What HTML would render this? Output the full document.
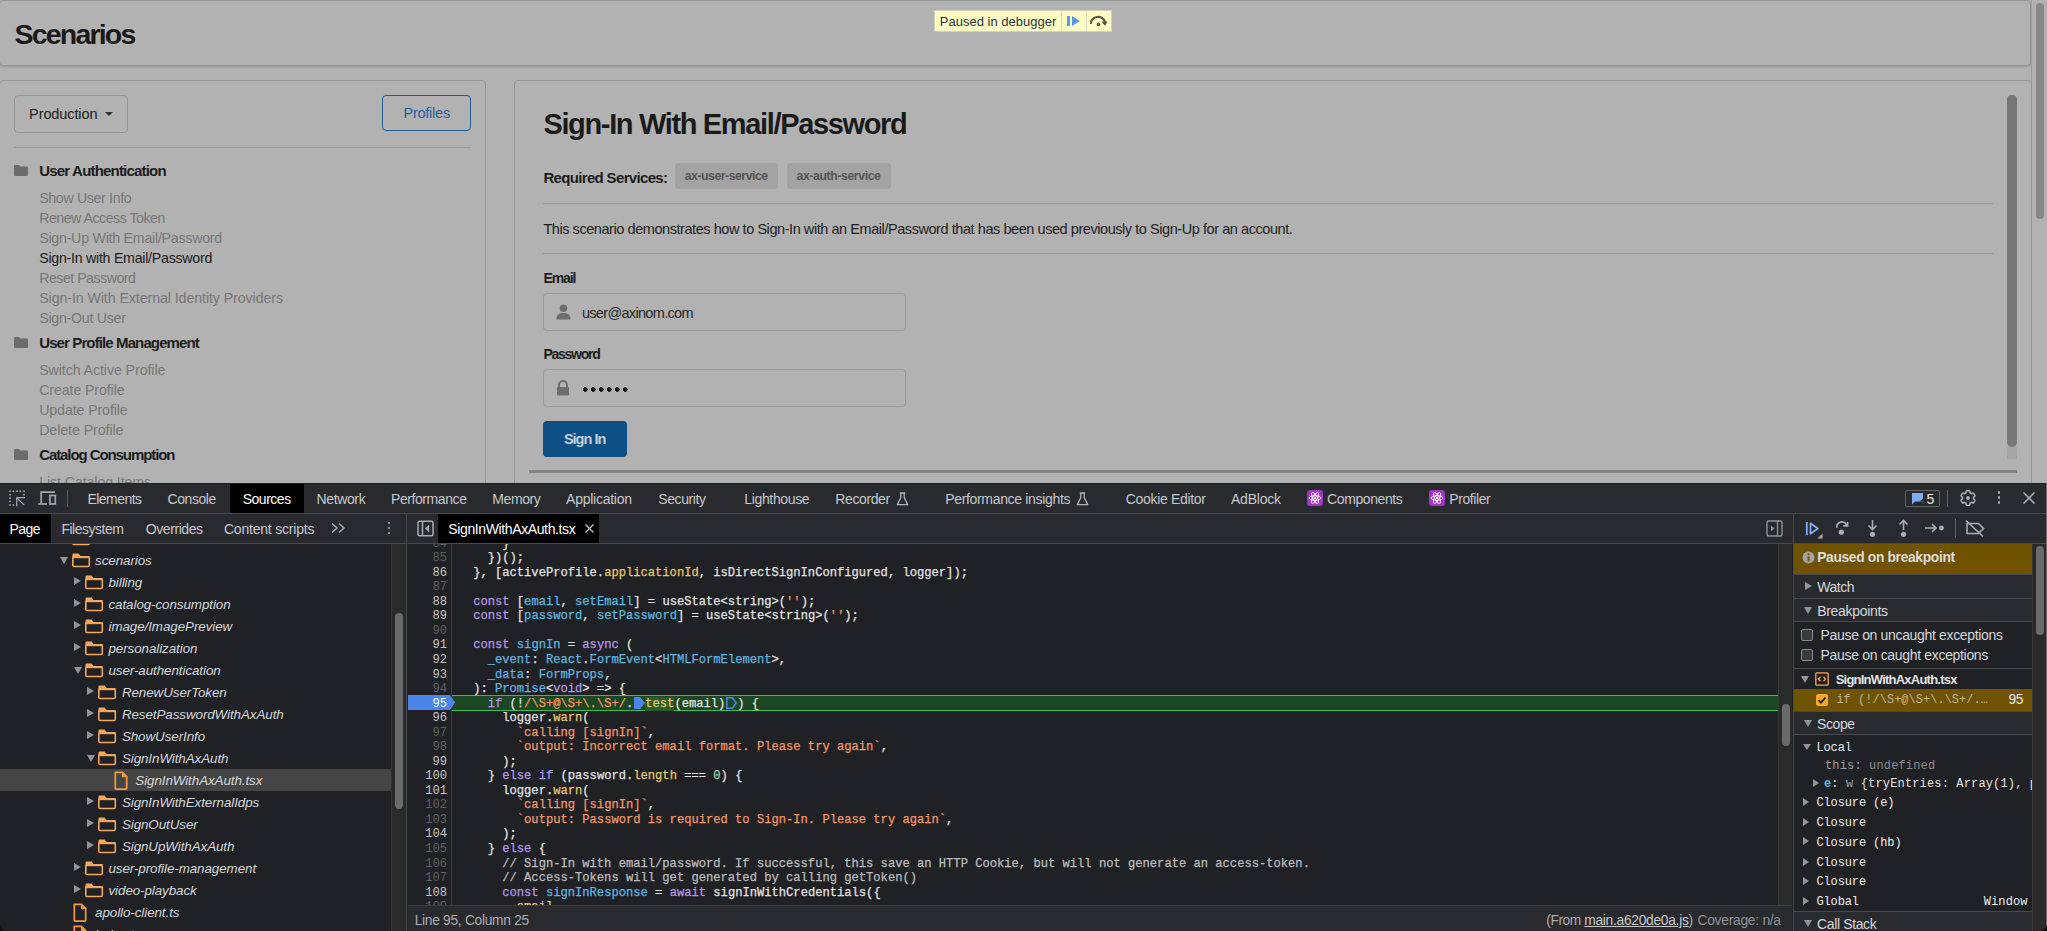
<!DOCTYPE html>
<html><head><meta charset="utf-8">
<style>
*{margin:0;padding:0;box-sizing:border-box}
html,body{width:2047px;height:931px;overflow:hidden;background:#b2b2b2;font-family:"Liberation Sans",sans-serif}
.a{position:absolute;white-space:nowrap}
#page{position:absolute;left:0;top:0;width:2047px;height:483px;background:#b2b2b2;overflow:hidden}
.card{position:absolute;border:1px solid #969696;border-radius:4px;background:#b2b2b2}
.nav{color:#767676;font-size:14px;letter-spacing:-0.35px}
.grp{color:#1c1c1c;font-size:14.6px;font-weight:bold;letter-spacing:-0.45px}
.fold{position:absolute;width:14px;height:11px;background:#6c6c6c;border-radius:1px}
.fold:before{content:"";position:absolute;left:0;top:-2px;width:6px;height:3px;background:#6c6c6c;border-radius:1px 1px 0 0}
#dt{position:absolute;left:0;top:483px;width:2047px;height:448px;background:#202124;overflow:hidden;color:#e3e3e3}
.tb{font-size:13.2px;color:#c3c3c3}
.mono{font-family:"Liberation Mono",monospace}
</style></head><body>
<div id="page">
<div class="card" style="left:-1px;top:0;width:2032px;height:66px;box-shadow:0 1px 2px rgba(0,0,0,.15)"></div>
<div class="a" style="left:14.5px;top:17.71px;font:normal bold 28.5px/normal 'Liberation Sans',sans-serif;color:#1a1a1a;letter-spacing:-1.805px;">Scenarios</div>
<div class="a" style="left:2031px;top:0px;width:1px;height:483px;background:#9d9d9d;"></div>
<div class="a" style="left:2036px;top:3px;width:8px;height:216px;background:#878787;border-radius:4px"></div>
<div class="card" style="left:-1px;top:80px;width:487px;height:420px"></div>
<div class="a" style="left:14px;top:95px;width:114px;height:38px;border:1px solid #969696;border-radius:4px"></div>
<div class="a" style="left:29.1px;top:105.88px;font:normal normal 14.5px/normal 'Liberation Sans',sans-serif;color:#1e1e1e;letter-spacing:-0.102px;">Production</div>
<div class="a" style="left:105.3px;top:112.3px;width:0;height:0;border-left:4px solid transparent;border-right:4px solid transparent;border-top:4px solid #2e2e2e"></div>
<div class="a" style="left:382px;top:95px;width:89px;height:36px;border:1px solid #1f5c93;border-radius:4px"></div>
<div class="a" style="left:403.5px;top:105.08px;font:normal normal 14.5px/normal 'Liberation Sans',sans-serif;color:#1f5f9c;letter-spacing:-0.244px;">Profiles</div>
<div class="a" style="left:14px;top:147px;width:457px;height:1px;background:#989898;"></div>
<svg class="a" style="left:14px;top:165px" width="14" height="11" viewBox="0 0 14 11"><path d="M0 1.1A1.1 1.1 0 0 1 1.1 0H5l1.5 1.5h6.4A1.1 1.1 0 0 1 14 2.6V9.9A1.1 1.1 0 0 1 12.9 11H1.1A1.1 1.1 0 0 1 0 9.9z" fill="#6c6c6c"/></svg>
<div class="a" style="left:39.2px;top:162.33px;font:normal bold 15px/normal 'Liberation Sans',sans-serif;color:#1c1c1c;letter-spacing:-0.809px;">User Authentication</div>
<div class="a" style="left:39.2px;top:190.15px;font:normal normal 14.2px/normal 'Liberation Sans',sans-serif;color:#777777;letter-spacing:-0.341px;">Show User Info</div>
<div class="a" style="left:39.2px;top:210.15px;font:normal normal 14.2px/normal 'Liberation Sans',sans-serif;color:#777777;letter-spacing:-0.495px;">Renew Access Token</div>
<div class="a" style="left:39.2px;top:230.15px;font:normal normal 14.2px/normal 'Liberation Sans',sans-serif;color:#777777;letter-spacing:-0.237px;">Sign-Up With Email/Password</div>
<div class="a" style="left:39.2px;top:250.15px;font:normal normal 14.2px/normal 'Liberation Sans',sans-serif;color:#1c1c1c;letter-spacing:-0.257px;">Sign-In with Email/Password</div>
<div class="a" style="left:39.2px;top:270.15px;font:normal normal 14.2px/normal 'Liberation Sans',sans-serif;color:#777777;letter-spacing:-0.506px;">Reset Password</div>
<div class="a" style="left:39.2px;top:290.15px;font:normal normal 14.2px/normal 'Liberation Sans',sans-serif;color:#777777;letter-spacing:-0.076px;">Sign-In With External Identity Providers</div>
<div class="a" style="left:39.2px;top:310.15px;font:normal normal 14.2px/normal 'Liberation Sans',sans-serif;color:#777777;letter-spacing:-0.259px;">Sign-Out User</div>
<svg class="a" style="left:14px;top:337px" width="14" height="11" viewBox="0 0 14 11"><path d="M0 1.1A1.1 1.1 0 0 1 1.1 0H5l1.5 1.5h6.4A1.1 1.1 0 0 1 14 2.6V9.9A1.1 1.1 0 0 1 12.9 11H1.1A1.1 1.1 0 0 1 0 9.9z" fill="#6c6c6c"/></svg>
<div class="a" style="left:39.2px;top:333.93px;font:normal bold 15px/normal 'Liberation Sans',sans-serif;color:#1c1c1c;letter-spacing:-0.885px;">User Profile Management</div>
<div class="a" style="left:39.2px;top:362.35px;font:normal normal 14.2px/normal 'Liberation Sans',sans-serif;color:#777777;letter-spacing:-0.079px;">Switch Active Profile</div>
<div class="a" style="left:39.2px;top:382.38px;font:normal normal 14.2px/normal 'Liberation Sans',sans-serif;color:#777777;letter-spacing:-0.101px;">Create Profile</div>
<div class="a" style="left:39.2px;top:402.41px;font:normal normal 14.2px/normal 'Liberation Sans',sans-serif;color:#777777;letter-spacing:-0.106px;">Update Profile</div>
<div class="a" style="left:39.2px;top:422.44px;font:normal normal 14.2px/normal 'Liberation Sans',sans-serif;color:#777777;letter-spacing:-0.067px;">Delete Profile</div>
<svg class="a" style="left:14px;top:449px" width="14" height="11" viewBox="0 0 14 11"><path d="M0 1.1A1.1 1.1 0 0 1 1.1 0H5l1.5 1.5h6.4A1.1 1.1 0 0 1 14 2.6V9.9A1.1 1.1 0 0 1 12.9 11H1.1A1.1 1.1 0 0 1 0 9.9z" fill="#6c6c6c"/></svg>
<div class="a" style="left:39.2px;top:445.73px;font:normal bold 15px/normal 'Liberation Sans',sans-serif;color:#1c1c1c;letter-spacing:-1.086px;">Catalog Consumption</div>
<div class="a" style="left:39.2px;top:474.45px;font:normal normal 14.2px/normal 'Liberation Sans',sans-serif;color:#777777;letter-spacing:-0.092px;">List Catalog Items</div>
<div class="card" style="left:514px;top:80px;width:1518px;height:420px"></div>
<div class="a" style="left:543.4px;top:107.95px;font:normal bold 29px/normal 'Liberation Sans',sans-serif;color:#1a1a1a;letter-spacing:-1.346px;">Sign-In With Email/Password</div>
<div class="a" style="left:543.4px;top:168.73px;font:normal bold 15px/normal 'Liberation Sans',sans-serif;color:#1c1c1c;letter-spacing:-0.661px;">Required Services:</div>
<div class="a" style="left:675px;top:163px;width:103px;height:26px;background:#a3a3a3;border-radius:4px"></div>
<div class="a" style="left:684.7px;top:169.07px;font:normal bold 12.3px/normal 'Liberation Sans',sans-serif;color:#555555;letter-spacing:-0.484px;">ax-user-service</div>
<div class="a" style="left:787px;top:163px;width:104px;height:26px;background:#a3a3a3;border-radius:4px"></div>
<div class="a" style="left:796.5px;top:169.07px;font:normal bold 12.3px/normal 'Liberation Sans',sans-serif;color:#555555;letter-spacing:-0.416px;">ax-auth-service</div>
<div class="a" style="left:543px;top:203px;width:1450px;height:1px;background:#999999;"></div>
<div class="a" style="left:543.4px;top:221.18px;font:normal normal 14.5px/normal 'Liberation Sans',sans-serif;color:#1e1e1e;letter-spacing:-0.438px;">This scenario demonstrates how to Sign-In with an Email/Password that has been used previously to Sign-Up for an account.</div>
<div class="a" style="left:543px;top:253px;width:1450px;height:1px;background:#999999;"></div>
<div class="a" style="left:543.5px;top:270.33px;font:normal bold 14px/normal 'Liberation Sans',sans-serif;color:#1c1c1c;letter-spacing:-1.130px;">Email</div>
<div class="a" style="left:543px;top:293px;width:363px;height:38px;border:1px solid #9a9a9a;border-radius:4px"></div>
<svg class="a" style="left:556px;top:304px" width="15" height="16" viewBox="0 0 15 16"><circle cx="7.5" cy="4.2" r="3.8" fill="#6e6e6e"/><path d="M0.5 15.5 C0.5 10.5 3 9 7.5 9 C12 9 14.5 10.5 14.5 15.5 Z" fill="#6e6e6e"/></svg>
<div class="a" style="left:581.9px;top:305.28px;font:normal normal 14.5px/normal 'Liberation Sans',sans-serif;color:#262626;letter-spacing:-0.673px;">user@axinom.com</div>
<div class="a" style="left:543.5px;top:346.33px;font:normal bold 14px/normal 'Liberation Sans',sans-serif;color:#1c1c1c;letter-spacing:-1.280px;">Password</div>
<div class="a" style="left:543px;top:369px;width:363px;height:38px;border:1px solid #9a9a9a;border-radius:4px"></div>
<svg class="a" style="left:556px;top:380px" width="14" height="16" viewBox="0 0 14 16"><path d="M3 7 V5 A4 4 0 0 1 11 5 V7" stroke="#6e6e6e" stroke-width="2" fill="none"/><rect x="1" y="7" width="12" height="8.5" rx="1" fill="#6e6e6e"/></svg>
<div class="a" style="left:583px;top:387px;width:46px;height:5px;background:radial-gradient(circle at 2.3px 2.5px,#1a1a1a 2.1px,transparent 2.5px) 0 0/8px 5px repeat-x"></div>
<div class="a" style="left:543px;top:421px;width:84px;height:36px;background:#0e4f85;border-radius:4px"></div>
<div class="a" style="left:563.9px;top:431.48px;font:normal bold 14.5px/normal 'Liberation Sans',sans-serif;color:#c5cfd8;letter-spacing:-0.990px;">Sign In</div>
<div class="a" style="left:2007px;top:95px;width:10px;height:352px;background:#777;border-radius:5px"></div>
<div class="a" style="left:2007px;top:440px;width:10px;height:19px;background:#a6a6a6;"></div>
<div class="a" style="left:2007px;top:95px;width:10px;height:352px;background:#777;border-radius:5px"></div>
<div class="a" style="left:529px;top:470px;width:1488px;height:3px;background:#858585;"></div>
<div class="a" style="left:934px;top:10px;width:178px;height:22px;background:#ffffc5;border:1px solid #d2d2ba"></div>
<div class="a" style="left:1061px;top:11px;width:1px;height:20px;background:#d8d8c0;"></div>
<div class="a" style="left:1086px;top:11px;width:1px;height:20px;background:#d8d8c0;"></div>
<div class="a" style="left:939.8px;top:14.04px;font:normal normal 13px/normal 'Liberation Sans',sans-serif;color:#2a3340;letter-spacing:0.007px;">Paused in debugger</div>
<svg class="a" style="left:1066px;top:15px" width="16" height="12" viewBox="0 0 16 12"><rect x="1" y="1" width="3" height="10" fill="#5d95e9"/><path d="M6 1 L14 6 L6 11 Z" fill="#5d95e9"/></svg>
<svg class="a" style="left:1089px;top:15px" width="20" height="13" viewBox="0 0 20 13"><path d="M2 9 A7 6 0 0 1 16 7" stroke="#5a5a48" stroke-width="2.2" fill="none"/><path d="M12.5 6.5 L18.5 6.5 L16 11 Z" fill="#5a5a48"/><circle cx="9.5" cy="9.5" r="1.8" fill="#5a5a48"/></svg>
</div>
<div class="a" style="left:0px;top:483px;width:2047px;height:448px;background:#202124;"></div>
<div class="a" style="left:0px;top:483px;width:2047px;height:30px;background:#292a2d;"></div>
<div class="a" style="left:0px;top:483px;width:2047px;height:1px;background:#1e1f22;"></div>
<div class="a" style="left:0px;top:513px;width:2047px;height:1px;background:#46494d;"></div>
<div class="a" style="left:0px;top:514px;width:2047px;height:29px;background:#292a2d;"></div>
<div class="a" style="left:0px;top:543px;width:2047px;height:1px;background:#46494d;"></div>
<div class="a" style="left:230px;top:484px;width:74px;height:29px;background:#000;"></div>
<svg class="a" style="left:0;top:485px" width="75" height="27" viewBox="0 485 75 27"><g fill="#a3a5a8"><rect x="9.2" y="490.4" width="1.6" height="1.6"/><rect x="12.7" y="490.4" width="1.6" height="1.6"/><rect x="16.2" y="490.4" width="1.6" height="1.6"/><rect x="19.5" y="490.4" width="1.6" height="1.6"/><rect x="23.2" y="490.4" width="1.6" height="1.6"/><rect x="9.2" y="494.0" width="1.6" height="1.6"/><rect x="9.2" y="497.4" width="1.6" height="1.6"/><rect x="9.2" y="500.7" width="1.6" height="1.6"/><rect x="9.2" y="504.2" width="1.6" height="1.6"/><rect x="23.2" y="493.9" width="1.6" height="1.6"/><rect x="12.7" y="504.2" width="1.6" height="1.6"/></g><g fill="none" stroke="#a3a5a8" stroke-width="1.3"><path d="M16.7 506.2V497.6H25"/><path d="M17.3 498.2L24.2 505.1"/></g><g fill="none" stroke="#a3a5a8" stroke-width="1.7"><path d="M41.2 504V492.2H55"/><path d="M38.1 504h8.8"/><rect x="49.9" y="495.5" width="5.4" height="8.5"/></g></svg>
<div class="a" style="left:67px;top:490px;width:1px;height:17px;background:#5a5d61;"></div>
<div class="a" style="left:87.5px;top:491.43px;font:normal normal 14.0px/normal 'Liberation Sans',sans-serif;color:#c5c8cc;letter-spacing:-0.545px;">Elements</div>
<div class="a" style="left:167.6px;top:491.43px;font:normal normal 14.0px/normal 'Liberation Sans',sans-serif;color:#c5c8cc;letter-spacing:-0.438px;">Console</div>
<div class="a" style="left:242.7px;top:491.43px;font:normal normal 14.0px/normal 'Liberation Sans',sans-serif;color:#ffffff;letter-spacing:-0.480px;">Sources</div>
<div class="a" style="left:316.5px;top:491.43px;font:normal normal 14.0px/normal 'Liberation Sans',sans-serif;color:#c5c8cc;letter-spacing:-0.364px;">Network</div>
<div class="a" style="left:391.0px;top:491.43px;font:normal normal 14.0px/normal 'Liberation Sans',sans-serif;color:#c5c8cc;letter-spacing:-0.423px;">Performance</div>
<div class="a" style="left:492.3px;top:491.43px;font:normal normal 14.0px/normal 'Liberation Sans',sans-serif;color:#c5c8cc;letter-spacing:-0.427px;">Memory</div>
<div class="a" style="left:566.1px;top:491.43px;font:normal normal 14.0px/normal 'Liberation Sans',sans-serif;color:#c5c8cc;letter-spacing:-0.254px;">Application</div>
<div class="a" style="left:658.3px;top:491.43px;font:normal normal 14.0px/normal 'Liberation Sans',sans-serif;color:#c5c8cc;letter-spacing:-0.409px;">Security</div>
<div class="a" style="left:744.3px;top:491.43px;font:normal normal 14.0px/normal 'Liberation Sans',sans-serif;color:#c5c8cc;letter-spacing:-0.350px;">Lighthouse</div>
<div class="a" style="left:835.3px;top:491.43px;font:normal normal 14.0px/normal 'Liberation Sans',sans-serif;color:#c5c8cc;letter-spacing:-0.398px;">Recorder</div>
<div class="a" style="left:945.2px;top:491.43px;font:normal normal 14.0px/normal 'Liberation Sans',sans-serif;color:#c5c8cc;letter-spacing:-0.325px;">Performance insights</div>
<div class="a" style="left:1125.8px;top:491.43px;font:normal normal 14.0px/normal 'Liberation Sans',sans-serif;color:#c5c8cc;letter-spacing:-0.334px;">Cookie Editor</div>
<div class="a" style="left:1231.0px;top:491.43px;font:normal normal 14.0px/normal 'Liberation Sans',sans-serif;color:#c5c8cc;letter-spacing:-0.223px;">AdBlock</div>
<div class="a" style="left:1327.1px;top:491.43px;font:normal normal 14.0px/normal 'Liberation Sans',sans-serif;color:#c5c8cc;letter-spacing:-0.408px;">Components</div>
<div class="a" style="left:1449.3px;top:491.43px;font:normal normal 14.0px/normal 'Liberation Sans',sans-serif;color:#c5c8cc;letter-spacing:-0.418px;">Profiler</div>
<svg class="a" style="left:895.5px;top:492px" width="13" height="14" viewBox="0 0 13 14" fill="none" stroke="#b0b3b8" stroke-width="1.3" stroke-linejoin="round"><path d="M3.8 1h5.4M4.8 1v4.5L1.3 12.6h10.4L8.2 5.5V1"/></svg>
<svg class="a" style="left:1076px;top:492px" width="13" height="14" viewBox="0 0 13 14" fill="none" stroke="#b0b3b8" stroke-width="1.3" stroke-linejoin="round"><path d="M3.8 1h5.4M4.8 1v4.5L1.3 12.6h10.4L8.2 5.5V1"/></svg>
<svg class="a" style="left:1307px;top:490px" width="16" height="16" viewBox="0 0 16 16"><rect width="16" height="16" rx="3" fill="#a233c6"/><g fill="none" stroke="#fff" stroke-width="0.9"><ellipse cx="8" cy="8" rx="6" ry="2.3"/><ellipse cx="8" cy="8" rx="6" ry="2.3" transform="rotate(60 8 8)"/><ellipse cx="8" cy="8" rx="6" ry="2.3" transform="rotate(120 8 8)"/></g><circle cx="8" cy="8" r="1.2" fill="#fff"/></svg>
<svg class="a" style="left:1429px;top:490px" width="16" height="16" viewBox="0 0 16 16"><rect width="16" height="16" rx="3" fill="#a233c6"/><g fill="none" stroke="#fff" stroke-width="0.9"><ellipse cx="8" cy="8" rx="6" ry="2.3"/><ellipse cx="8" cy="8" rx="6" ry="2.3" transform="rotate(60 8 8)"/><ellipse cx="8" cy="8" rx="6" ry="2.3" transform="rotate(120 8 8)"/></g><circle cx="8" cy="8" r="1.2" fill="#fff"/></svg>
<div class="a" style="left:1905px;top:490px;width:35px;height:17px;border:1px solid #5f6368;border-radius:2px"></div>
<svg class="a" style="left:1911px;top:492px" width="13" height="13" viewBox="0 0 13 13"><path d="M1 1h11v8.5H4L1 12.5z" fill="#7cacf8"/><path d="M9 9.5L12 6.5V9.5z" fill="#292a2d"/></svg>
<div class="a" style="left:1926.4px;top:491.43px;font:normal normal 14.0px/normal 'Liberation Sans',sans-serif;color:#e8eaed;letter-spacing:0.000px;">5</div>
<div class="a" style="left:1947px;top:490px;width:1px;height:17px;background:#5f6368;"></div>
<svg class="a" style="left:1959px;top:489px" width="18" height="18" viewBox="0 0 24 24"><path fill="none" stroke="#a9acb0" stroke-width="2" stroke-linejoin="round" d="M19.14 12.94c.04-.3.06-.61.06-.94 0-.32-.02-.64-.07-.94l2.03-1.58a.49.49 0 0 0 .12-.61l-1.92-3.32a.488.488 0 0 0-.59-.22l-2.39.96c-.5-.38-1.030-.7-1.62-.94l-.36-2.54a.484.484 0 0 0-.48-.41h-3.84c-.24 0-.43.17-.47.41l-.36 2.54c-.59.24-1.13.57-1.62.94l-2.39-.96c-.22-.08-.47 0-.59.22L2.740 8.870c-.12.21-.08.47.12.61l2.030 1.58c-.05.3-.09.63-.09.94s.02.64.07.94l-2.03 1.58a.49.49 0 0 0-.12.61l1.920 3.32c.12.22.37.29.59.22l2.39-.96c.5.38 1.03.7 1.62.94l.36 2.54c.05.24.24.41.48.41h3.84c.24 0 .44-.17.47-.41l.36-2.54c.59-.24 1.13-.56 1.62-.94l2.39.96c.22.08.47 0 .59-.22l1.92-3.32c.12-.22.07-.47-.12-.61l-2.01-1.58z"/><circle cx="12" cy="12" r="2.6" fill="#a9acb0"/></svg>
<div class="a" style="left:1997.7px;top:491px;width:2.6px;height:2.6px;border-radius:50%;background:#a9acb0"></div>
<div class="a" style="left:1997.7px;top:496px;width:2.6px;height:2.6px;border-radius:50%;background:#a9acb0"></div>
<div class="a" style="left:1997.7px;top:501px;width:2.6px;height:2.6px;border-radius:50%;background:#a9acb0"></div>
<svg class="a" style="left:2022px;top:491px" width="14" height="14" viewBox="0 0 14 14"><path d="M1.5 1.5l11 11M12.5 1.5l-11 11" stroke="#a9acb0" stroke-width="1.6"/></svg>
<div class="a" style="left:0px;top:514px;width:51px;height:29px;background:#000;"></div>
<div class="a" style="left:9.4px;top:520.83px;font:normal normal 14.0px/normal 'Liberation Sans',sans-serif;color:#ffffff;letter-spacing:-0.549px;">Page</div>
<div class="a" style="left:61.4px;top:520.83px;font:normal normal 14.0px/normal 'Liberation Sans',sans-serif;color:#c5c8cc;letter-spacing:-0.490px;">Filesystem</div>
<div class="a" style="left:145.8px;top:520.83px;font:normal normal 14.0px/normal 'Liberation Sans',sans-serif;color:#c5c8cc;letter-spacing:-0.432px;">Overrides</div>
<div class="a" style="left:223.9px;top:520.83px;font:normal normal 14.0px/normal 'Liberation Sans',sans-serif;color:#c5c8cc;letter-spacing:-0.205px;">Content scripts</div>
<svg class="a" style="left:329.5px;top:521.8px" width="16" height="12" viewBox="0 0 16 12" fill="none" stroke="#a9acb0" stroke-width="1.5"><path d="M2 1.5l5 4.5-5 4.5M9 1.5l5 4.5-5 4.5"/></svg>
<div class="a" style="left:387.7px;top:521.5px;width:2.6px;height:2.6px;border-radius:50%;background:#a9acb0"></div>
<div class="a" style="left:387.7px;top:526.5px;width:2.6px;height:2.6px;border-radius:50%;background:#a9acb0"></div>
<div class="a" style="left:387.7px;top:531.5px;width:2.6px;height:2.6px;border-radius:50%;background:#a9acb0"></div>
<div class="a" style="left:406px;top:514px;width:1px;height:417px;background:#46494d;"></div>
<svg class="a" style="left:417px;top:519.5px" width="17" height="17" viewBox="0 0 17 17" fill="none" stroke="#a9acb0" stroke-width="1.5"><rect x="1" y="1.2" width="15" height="14.6" rx="1.5"/><path d="M5.5 1v15"/><path d="M12.2 4.5v8l-4.2-4z" fill="#a9acb0" stroke="none"/></svg>
<div class="a" style="left:438px;top:514px;width:161px;height:29px;background:#000;"></div>
<div class="a" style="left:448.3px;top:520.83px;font:normal normal 14.0px/normal 'Liberation Sans',sans-serif;color:#ffffff;letter-spacing:-0.381px;">SignInWithAxAuth.tsx</div>
<svg class="a" style="left:584px;top:523px" width="11" height="11" viewBox="0 0 11 11"><path d="M1.5 1.5l8 8M9.5 1.5l-8 8" stroke="#c0c3c7" stroke-width="1.3"/></svg>
<svg class="a" style="left:1766px;top:520px" width="17" height="17" viewBox="0 0 17 17" fill="none" stroke="#8f9297" stroke-width="1.4"><rect x="1" y="1" width="15" height="15" rx="1.5"/><path d="M11.5 1v15"/><path d="M5 5.5v6l3.5-3z" fill="#8f9297" stroke="none"/></svg>
<div class="a" style="left:1793px;top:514px;width:1px;height:417px;background:#46494d;"></div>
<svg class="a" style="left:1805px;top:520px" width="19" height="19" viewBox="0 0 19 19"><path d="M1.8 2v13" stroke="#7cacf8" stroke-width="1.8"/><path d="M5.5 3.3l7.3 5.2-7.3 5.2z" fill="none" stroke="#7cacf8" stroke-width="1.8" stroke-linejoin="round"/><path d="M17.5 13.5v5h-5z" fill="#a9acb0"/></svg>
<svg class="a" style="left:1834px;top:519px" width="17" height="18" viewBox="0 0 17 18" fill="none" stroke="#a9acb0" stroke-width="1.7"><path d="M3 8.8A5 4.5 0 0 1 12.8 6.2"/><path d="M9.3 6.8h4.3V3" /><circle cx="7.3" cy="13.2" r="2.6" fill="#a9acb0" stroke="none"/></svg>
<svg class="a" style="left:1866px;top:519px" width="13" height="19" viewBox="0 0 13 19" fill="none" stroke="#a9acb0" stroke-width="1.6"><path d="M6.5 1v9M2.5 6.5l4 4 4-4"/><circle cx="6.5" cy="15.3" r="2.6" fill="#a9acb0" stroke="none"/></svg>
<svg class="a" style="left:1897px;top:519px" width="13" height="19" viewBox="0 0 13 19" fill="none" stroke="#a9acb0" stroke-width="1.6"><path d="M6.5 11V2M2.5 5.5l4-4 4 4"/><circle cx="6.5" cy="15.3" r="2.6" fill="#a9acb0" stroke="none"/></svg>
<svg class="a" style="left:1924px;top:520px" width="22" height="16" viewBox="0 0 22 16" fill="none" stroke="#a9acb0" stroke-width="1.6"><path d="M1 8h11M8 4l4 4-4 4"/><circle cx="17.5" cy="8" r="2.4" fill="#a9acb0" stroke="none"/></svg>
<div class="a" style="left:1955px;top:519px;width:1px;height:19px;background:#5f6368;"></div>
<svg class="a" style="left:1964px;top:519px" width="22" height="19" viewBox="0 0 22 19" fill="none" stroke="#a9acb0" stroke-width="1.6"><path d="M3 4.5h11.5l5 5-5 5H3z"/><path d="M2 1.5l17 16"/></svg>
<div class="a" style="left:0;top:544px;width:406px;height:387px;overflow:hidden">
<div class="a" style="left:0px;top:225px;width:391px;height:22px;background:#454545;"></div>
<div class="a" style="left:60.4px;top:-10.6px;width:0;height:0;border-top:4.7px solid transparent;border-bottom:4.7px solid transparent;border-left:7.3px solid #909397"></div>
<svg class="a" style="left:71.5px;top:-13.1px" width="19" height="15" viewBox="0 0 19 15"><path d="M0.5 3.2V1.6A1.1 1.1 0 0 1 1.6 0.5H6.6L8.6 3.2z" fill="#f2a65e"/><rect x="0.8" y="3.9" width="16.5" height="9.6" rx="1.3" fill="none" stroke="#f2a65e" stroke-width="1.6"/><rect x="0.5" y="3" width="17" height="2.2" fill="#f2a65e"/></svg>
<div class="a" style="left:95.1px;top:-13.13px;font:italic normal 13.4px/normal 'Liberation Sans',sans-serif;color:#d5d8dc;letter-spacing:-0.080px;">routes</div>
<div class="a" style="left:60.1px;top:13.4px;width:0;height:0;border-left:4.5px solid transparent;border-right:4.5px solid transparent;border-top:7px solid #909397"></div>
<svg class="a" style="left:71.5px;top:8.9px" width="19" height="15" viewBox="0 0 19 15"><path d="M0.5 3.2V1.6A1.1 1.1 0 0 1 1.6 0.5H6.6L8.6 3.2z" fill="#f2a65e"/><rect x="0.8" y="3.9" width="16.5" height="9.6" rx="1.3" fill="none" stroke="#f2a65e" stroke-width="1.6"/><rect x="0.5" y="3" width="17" height="2.2" fill="#f2a65e"/></svg>
<div class="a" style="left:95.1px;top:8.87px;font:italic normal 13.4px/normal 'Liberation Sans',sans-serif;color:#d5d8dc;letter-spacing:-0.080px;">scenarios</div>
<div class="a" style="left:73.8px;top:33.4px;width:0;height:0;border-top:4.7px solid transparent;border-bottom:4.7px solid transparent;border-left:7.3px solid #909397"></div>
<svg class="a" style="left:84.9px;top:30.9px" width="19" height="15" viewBox="0 0 19 15"><path d="M0.5 3.2V1.6A1.1 1.1 0 0 1 1.6 0.5H6.6L8.6 3.2z" fill="#f2a65e"/><rect x="0.8" y="3.9" width="16.5" height="9.6" rx="1.3" fill="none" stroke="#f2a65e" stroke-width="1.6"/><rect x="0.5" y="3" width="17" height="2.2" fill="#f2a65e"/></svg>
<div class="a" style="left:108.5px;top:30.87px;font:italic normal 13.4px/normal 'Liberation Sans',sans-serif;color:#d5d8dc;letter-spacing:-0.080px;">billing</div>
<div class="a" style="left:73.8px;top:55.4px;width:0;height:0;border-top:4.7px solid transparent;border-bottom:4.7px solid transparent;border-left:7.3px solid #909397"></div>
<svg class="a" style="left:84.9px;top:52.9px" width="19" height="15" viewBox="0 0 19 15"><path d="M0.5 3.2V1.6A1.1 1.1 0 0 1 1.6 0.5H6.6L8.6 3.2z" fill="#f2a65e"/><rect x="0.8" y="3.9" width="16.5" height="9.6" rx="1.3" fill="none" stroke="#f2a65e" stroke-width="1.6"/><rect x="0.5" y="3" width="17" height="2.2" fill="#f2a65e"/></svg>
<div class="a" style="left:108.5px;top:52.87px;font:italic normal 13.4px/normal 'Liberation Sans',sans-serif;color:#d5d8dc;letter-spacing:-0.080px;">catalog-consumption</div>
<div class="a" style="left:73.8px;top:77.4px;width:0;height:0;border-top:4.7px solid transparent;border-bottom:4.7px solid transparent;border-left:7.3px solid #909397"></div>
<svg class="a" style="left:84.9px;top:74.9px" width="19" height="15" viewBox="0 0 19 15"><path d="M0.5 3.2V1.6A1.1 1.1 0 0 1 1.6 0.5H6.6L8.6 3.2z" fill="#f2a65e"/><rect x="0.8" y="3.9" width="16.5" height="9.6" rx="1.3" fill="none" stroke="#f2a65e" stroke-width="1.6"/><rect x="0.5" y="3" width="17" height="2.2" fill="#f2a65e"/></svg>
<div class="a" style="left:108.5px;top:74.87px;font:italic normal 13.4px/normal 'Liberation Sans',sans-serif;color:#d5d8dc;letter-spacing:-0.080px;">image/ImagePreview</div>
<div class="a" style="left:73.8px;top:99.4px;width:0;height:0;border-top:4.7px solid transparent;border-bottom:4.7px solid transparent;border-left:7.3px solid #909397"></div>
<svg class="a" style="left:84.9px;top:96.9px" width="19" height="15" viewBox="0 0 19 15"><path d="M0.5 3.2V1.6A1.1 1.1 0 0 1 1.6 0.5H6.6L8.6 3.2z" fill="#f2a65e"/><rect x="0.8" y="3.9" width="16.5" height="9.6" rx="1.3" fill="none" stroke="#f2a65e" stroke-width="1.6"/><rect x="0.5" y="3" width="17" height="2.2" fill="#f2a65e"/></svg>
<div class="a" style="left:108.5px;top:96.87px;font:italic normal 13.4px/normal 'Liberation Sans',sans-serif;color:#d5d8dc;letter-spacing:-0.080px;">personalization</div>
<div class="a" style="left:73.5px;top:123.4px;width:0;height:0;border-left:4.5px solid transparent;border-right:4.5px solid transparent;border-top:7px solid #909397"></div>
<svg class="a" style="left:84.9px;top:118.9px" width="19" height="15" viewBox="0 0 19 15"><path d="M0.5 3.2V1.6A1.1 1.1 0 0 1 1.6 0.5H6.6L8.6 3.2z" fill="#f2a65e"/><rect x="0.8" y="3.9" width="16.5" height="9.6" rx="1.3" fill="none" stroke="#f2a65e" stroke-width="1.6"/><rect x="0.5" y="3" width="17" height="2.2" fill="#f2a65e"/></svg>
<div class="a" style="left:108.5px;top:118.87px;font:italic normal 13.4px/normal 'Liberation Sans',sans-serif;color:#d5d8dc;letter-spacing:-0.080px;">user-authentication</div>
<div class="a" style="left:87.2px;top:143.4px;width:0;height:0;border-top:4.7px solid transparent;border-bottom:4.7px solid transparent;border-left:7.3px solid #909397"></div>
<svg class="a" style="left:98.3px;top:140.9px" width="19" height="15" viewBox="0 0 19 15"><path d="M0.5 3.2V1.6A1.1 1.1 0 0 1 1.6 0.5H6.6L8.6 3.2z" fill="#f2a65e"/><rect x="0.8" y="3.9" width="16.5" height="9.6" rx="1.3" fill="none" stroke="#f2a65e" stroke-width="1.6"/><rect x="0.5" y="3" width="17" height="2.2" fill="#f2a65e"/></svg>
<div class="a" style="left:121.9px;top:140.87px;font:italic normal 13.4px/normal 'Liberation Sans',sans-serif;color:#d5d8dc;letter-spacing:-0.080px;">RenewUserToken</div>
<div class="a" style="left:87.2px;top:165.4px;width:0;height:0;border-top:4.7px solid transparent;border-bottom:4.7px solid transparent;border-left:7.3px solid #909397"></div>
<svg class="a" style="left:98.3px;top:162.9px" width="19" height="15" viewBox="0 0 19 15"><path d="M0.5 3.2V1.6A1.1 1.1 0 0 1 1.6 0.5H6.6L8.6 3.2z" fill="#f2a65e"/><rect x="0.8" y="3.9" width="16.5" height="9.6" rx="1.3" fill="none" stroke="#f2a65e" stroke-width="1.6"/><rect x="0.5" y="3" width="17" height="2.2" fill="#f2a65e"/></svg>
<div class="a" style="left:121.9px;top:162.87px;font:italic normal 13.4px/normal 'Liberation Sans',sans-serif;color:#d5d8dc;letter-spacing:-0.080px;">ResetPasswordWithAxAuth</div>
<div class="a" style="left:87.2px;top:187.4px;width:0;height:0;border-top:4.7px solid transparent;border-bottom:4.7px solid transparent;border-left:7.3px solid #909397"></div>
<svg class="a" style="left:98.3px;top:184.9px" width="19" height="15" viewBox="0 0 19 15"><path d="M0.5 3.2V1.6A1.1 1.1 0 0 1 1.6 0.5H6.6L8.6 3.2z" fill="#f2a65e"/><rect x="0.8" y="3.9" width="16.5" height="9.6" rx="1.3" fill="none" stroke="#f2a65e" stroke-width="1.6"/><rect x="0.5" y="3" width="17" height="2.2" fill="#f2a65e"/></svg>
<div class="a" style="left:121.9px;top:184.87px;font:italic normal 13.4px/normal 'Liberation Sans',sans-serif;color:#d5d8dc;letter-spacing:-0.080px;">ShowUserInfo</div>
<div class="a" style="left:86.9px;top:211.4px;width:0;height:0;border-left:4.5px solid transparent;border-right:4.5px solid transparent;border-top:7px solid #909397"></div>
<svg class="a" style="left:98.3px;top:206.9px" width="19" height="15" viewBox="0 0 19 15"><path d="M0.5 3.2V1.6A1.1 1.1 0 0 1 1.6 0.5H6.6L8.6 3.2z" fill="#f2a65e"/><rect x="0.8" y="3.9" width="16.5" height="9.6" rx="1.3" fill="none" stroke="#f2a65e" stroke-width="1.6"/><rect x="0.5" y="3" width="17" height="2.2" fill="#f2a65e"/></svg>
<div class="a" style="left:121.9px;top:206.87px;font:italic normal 13.4px/normal 'Liberation Sans',sans-serif;color:#d5d8dc;letter-spacing:-0.080px;">SignInWithAxAuth</div>
<svg class="a" style="left:113.6px;top:227.1px" width="14" height="19" viewBox="0 0 14 19"><path d="M1.3 1.3h7.2l4.2 4.4v11.6a0.8 0.8 0 0 1-0.8 0.8H2.1a0.8 0.8 0 0 1-0.8-0.8z" fill="none" stroke="#f29b38" stroke-width="1.7" stroke-linejoin="round"/><path d="M8 1.3v4.9h4.7z" fill="#f29b38"/></svg>
<div class="a" style="left:135.3px;top:228.87px;font:italic normal 13.4px/normal 'Liberation Sans',sans-serif;color:#d5d8dc;letter-spacing:-0.080px;">SignInWithAxAuth.tsx</div>
<div class="a" style="left:87.2px;top:253.4px;width:0;height:0;border-top:4.7px solid transparent;border-bottom:4.7px solid transparent;border-left:7.3px solid #909397"></div>
<svg class="a" style="left:98.3px;top:250.9px" width="19" height="15" viewBox="0 0 19 15"><path d="M0.5 3.2V1.6A1.1 1.1 0 0 1 1.6 0.5H6.6L8.6 3.2z" fill="#f2a65e"/><rect x="0.8" y="3.9" width="16.5" height="9.6" rx="1.3" fill="none" stroke="#f2a65e" stroke-width="1.6"/><rect x="0.5" y="3" width="17" height="2.2" fill="#f2a65e"/></svg>
<div class="a" style="left:121.9px;top:250.87px;font:italic normal 13.4px/normal 'Liberation Sans',sans-serif;color:#d5d8dc;letter-spacing:-0.080px;">SignInWithExternalIdps</div>
<div class="a" style="left:87.2px;top:275.4px;width:0;height:0;border-top:4.7px solid transparent;border-bottom:4.7px solid transparent;border-left:7.3px solid #909397"></div>
<svg class="a" style="left:98.3px;top:272.9px" width="19" height="15" viewBox="0 0 19 15"><path d="M0.5 3.2V1.6A1.1 1.1 0 0 1 1.6 0.5H6.6L8.6 3.2z" fill="#f2a65e"/><rect x="0.8" y="3.9" width="16.5" height="9.6" rx="1.3" fill="none" stroke="#f2a65e" stroke-width="1.6"/><rect x="0.5" y="3" width="17" height="2.2" fill="#f2a65e"/></svg>
<div class="a" style="left:121.9px;top:272.87px;font:italic normal 13.4px/normal 'Liberation Sans',sans-serif;color:#d5d8dc;letter-spacing:-0.080px;">SignOutUser</div>
<div class="a" style="left:87.2px;top:297.4px;width:0;height:0;border-top:4.7px solid transparent;border-bottom:4.7px solid transparent;border-left:7.3px solid #909397"></div>
<svg class="a" style="left:98.3px;top:294.9px" width="19" height="15" viewBox="0 0 19 15"><path d="M0.5 3.2V1.6A1.1 1.1 0 0 1 1.6 0.5H6.6L8.6 3.2z" fill="#f2a65e"/><rect x="0.8" y="3.9" width="16.5" height="9.6" rx="1.3" fill="none" stroke="#f2a65e" stroke-width="1.6"/><rect x="0.5" y="3" width="17" height="2.2" fill="#f2a65e"/></svg>
<div class="a" style="left:121.9px;top:294.87px;font:italic normal 13.4px/normal 'Liberation Sans',sans-serif;color:#d5d8dc;letter-spacing:-0.080px;">SignUpWithAxAuth</div>
<div class="a" style="left:73.8px;top:319.4px;width:0;height:0;border-top:4.7px solid transparent;border-bottom:4.7px solid transparent;border-left:7.3px solid #909397"></div>
<svg class="a" style="left:84.9px;top:316.9px" width="19" height="15" viewBox="0 0 19 15"><path d="M0.5 3.2V1.6A1.1 1.1 0 0 1 1.6 0.5H6.6L8.6 3.2z" fill="#f2a65e"/><rect x="0.8" y="3.9" width="16.5" height="9.6" rx="1.3" fill="none" stroke="#f2a65e" stroke-width="1.6"/><rect x="0.5" y="3" width="17" height="2.2" fill="#f2a65e"/></svg>
<div class="a" style="left:108.5px;top:316.87px;font:italic normal 13.4px/normal 'Liberation Sans',sans-serif;color:#d5d8dc;letter-spacing:-0.080px;">user-profile-management</div>
<div class="a" style="left:73.8px;top:341.4px;width:0;height:0;border-top:4.7px solid transparent;border-bottom:4.7px solid transparent;border-left:7.3px solid #909397"></div>
<svg class="a" style="left:84.9px;top:338.9px" width="19" height="15" viewBox="0 0 19 15"><path d="M0.5 3.2V1.6A1.1 1.1 0 0 1 1.6 0.5H6.6L8.6 3.2z" fill="#f2a65e"/><rect x="0.8" y="3.9" width="16.5" height="9.6" rx="1.3" fill="none" stroke="#f2a65e" stroke-width="1.6"/><rect x="0.5" y="3" width="17" height="2.2" fill="#f2a65e"/></svg>
<div class="a" style="left:108.5px;top:338.87px;font:italic normal 13.4px/normal 'Liberation Sans',sans-serif;color:#d5d8dc;letter-spacing:-0.080px;">video-playback</div>
<svg class="a" style="left:73.4px;top:359.1px" width="14" height="19" viewBox="0 0 14 19"><path d="M1.3 1.3h7.2l4.2 4.4v11.6a0.8 0.8 0 0 1-0.8 0.8H2.1a0.8 0.8 0 0 1-0.8-0.8z" fill="none" stroke="#f29b38" stroke-width="1.7" stroke-linejoin="round"/><path d="M8 1.3v4.9h4.7z" fill="#f29b38"/></svg>
<div class="a" style="left:95.1px;top:360.87px;font:italic normal 13.4px/normal 'Liberation Sans',sans-serif;color:#d5d8dc;letter-spacing:-0.080px;">apollo-client.ts</div>
<svg class="a" style="left:73.4px;top:381.1px" width="14" height="19" viewBox="0 0 14 19"><path d="M1.3 1.3h7.2l4.2 4.4v11.6a0.8 0.8 0 0 1-0.8 0.8H2.1a0.8 0.8 0 0 1-0.8-0.8z" fill="none" stroke="#f29b38" stroke-width="1.7" stroke-linejoin="round"/><path d="M8 1.3v4.9h4.7z" fill="#f29b38"/></svg>
<div class="a" style="left:95.1px;top:382.87px;font:italic normal 13.4px/normal 'Liberation Sans',sans-serif;color:#d5d8dc;letter-spacing:-0.080px;">index.tsx</div>
<div class="a" style="left:391px;top:0px;width:1px;height:387px;background:#353638;"></div>
<div class="a" style="left:392px;top:0px;width:14px;height:387px;background:#2a2a2b;"></div>
<div class="a" style="left:395px;top:69px;width:8px;height:196px;background:#6b6b6b;border-radius:4px"></div>
</div>
<div class="a" style="left:408px;top:544px;width:1384px;height:361px;overflow:hidden">
<div class="a" style="left:43px;top:0px;width:1px;height:361px;background:#3a3b3e;"></div>
<div class="a" style="left:44px;top:151px;width:1327px;height:16px;background:#1b4721;border-top:1px solid #3dbb5b;border-bottom:1px solid #3dbb5b"></div>
<svg class="a" style="left:0px;top:151px" width="48" height="15" viewBox="0 0 48 15"><path d="M0 0h42l5 7.5-5 7.5H0z" fill="#4a86e8"/></svg>
<div class="a mono" style="left:0;width:39px;text-align:right;top:-7.34px;height:14.54px;line-height:14.54px;font-size:12.13px;color:#5d6064">84</div>
<div class="a mono" style="left:50.60000000000002px;top:-7.34px;height:14.54px;line-height:14.54px;font-size:12.13px;white-space:pre;-webkit-text-stroke:0.25px"><span style="color:#e3e3e3">      }</span></div>
<div class="a mono" style="left:0;width:39px;text-align:right;top:7.20px;height:14.54px;line-height:14.54px;font-size:12.13px;color:#5d6064">85</div>
<div class="a mono" style="left:50.60000000000002px;top:7.20px;height:14.54px;line-height:14.54px;font-size:12.13px;white-space:pre;-webkit-text-stroke:0.25px"><span style="color:#e3e3e3">    })();</span></div>
<div class="a mono" style="left:0;width:39px;text-align:right;top:21.74px;height:14.54px;line-height:14.54px;font-size:12.13px;color:#c2c4c7">86</div>
<div class="a mono" style="left:50.60000000000002px;top:21.74px;height:14.54px;line-height:14.54px;font-size:12.13px;white-space:pre;-webkit-text-stroke:0.25px"><span style="color:#e3e3e3">  }, [activeProfile.</span><span style="color:#e6c86a">applicationId</span><span style="color:#e3e3e3">, isDirectSignInConfigured, logger]);</span></div>
<div class="a mono" style="left:0;width:39px;text-align:right;top:36.28px;height:14.54px;line-height:14.54px;font-size:12.13px;color:#5d6064">87</div>
<div class="a mono" style="left:50.60000000000002px;top:36.28px;height:14.54px;line-height:14.54px;font-size:12.13px;white-space:pre;-webkit-text-stroke:0.25px"></div>
<div class="a mono" style="left:0;width:39px;text-align:right;top:50.82px;height:14.54px;line-height:14.54px;font-size:12.13px;color:#c2c4c7">88</div>
<div class="a mono" style="left:50.60000000000002px;top:50.82px;height:14.54px;line-height:14.54px;font-size:12.13px;white-space:pre;-webkit-text-stroke:0.25px"><span style="color:#e3e3e3">  </span><span style="color:#b696ea">const</span><span style="color:#e3e3e3"> [</span><span style="color:#5cb5e2">email</span><span style="color:#e3e3e3">, </span><span style="color:#5cb5e2">setEmail</span><span style="color:#e3e3e3">] = useState&lt;string&gt;(</span><span style="color:#f29766">&#x27;&#x27;</span><span style="color:#e3e3e3">);</span></div>
<div class="a mono" style="left:0;width:39px;text-align:right;top:65.36px;height:14.54px;line-height:14.54px;font-size:12.13px;color:#c2c4c7">89</div>
<div class="a mono" style="left:50.60000000000002px;top:65.36px;height:14.54px;line-height:14.54px;font-size:12.13px;white-space:pre;-webkit-text-stroke:0.25px"><span style="color:#e3e3e3">  </span><span style="color:#b696ea">const</span><span style="color:#e3e3e3"> [</span><span style="color:#5cb5e2">password</span><span style="color:#e3e3e3">, </span><span style="color:#5cb5e2">setPassword</span><span style="color:#e3e3e3">] = useState&lt;string&gt;(</span><span style="color:#f29766">&#x27;&#x27;</span><span style="color:#e3e3e3">);</span></div>
<div class="a mono" style="left:0;width:39px;text-align:right;top:79.90px;height:14.54px;line-height:14.54px;font-size:12.13px;color:#5d6064">90</div>
<div class="a mono" style="left:50.60000000000002px;top:79.90px;height:14.54px;line-height:14.54px;font-size:12.13px;white-space:pre;-webkit-text-stroke:0.25px"></div>
<div class="a mono" style="left:0;width:39px;text-align:right;top:94.44px;height:14.54px;line-height:14.54px;font-size:12.13px;color:#c2c4c7">91</div>
<div class="a mono" style="left:50.60000000000002px;top:94.44px;height:14.54px;line-height:14.54px;font-size:12.13px;white-space:pre;-webkit-text-stroke:0.25px"><span style="color:#e3e3e3">  </span><span style="color:#b696ea">const</span><span style="color:#e3e3e3"> </span><span style="color:#5cb5e2">signIn</span><span style="color:#e3e3e3"> = </span><span style="color:#b696ea">async</span><span style="color:#e3e3e3"> (</span></div>
<div class="a mono" style="left:0;width:39px;text-align:right;top:108.98px;height:14.54px;line-height:14.54px;font-size:12.13px;color:#c2c4c7">92</div>
<div class="a mono" style="left:50.60000000000002px;top:108.98px;height:14.54px;line-height:14.54px;font-size:12.13px;white-space:pre;-webkit-text-stroke:0.25px"><span style="color:#e3e3e3">    </span><span style="color:#5cb5e2">_event</span><span style="color:#e3e3e3">: </span><span style="color:#5cb5e2">React</span><span style="color:#e3e3e3">.</span><span style="color:#5cb5e2">FormEvent</span><span style="color:#e3e3e3">&lt;</span><span style="color:#5cb5e2">HTMLFormElement</span><span style="color:#e3e3e3">&gt;,</span></div>
<div class="a mono" style="left:0;width:39px;text-align:right;top:123.52px;height:14.54px;line-height:14.54px;font-size:12.13px;color:#c2c4c7">93</div>
<div class="a mono" style="left:50.60000000000002px;top:123.52px;height:14.54px;line-height:14.54px;font-size:12.13px;white-space:pre;-webkit-text-stroke:0.25px"><span style="color:#e3e3e3">    </span><span style="color:#5cb5e2">_data</span><span style="color:#e3e3e3">: </span><span style="color:#5cb5e2">FormProps</span><span style="color:#e3e3e3">,</span></div>
<div class="a mono" style="left:0;width:39px;text-align:right;top:138.06px;height:14.54px;line-height:14.54px;font-size:12.13px;color:#5d6064">94</div>
<div class="a mono" style="left:50.60000000000002px;top:138.06px;height:14.54px;line-height:14.54px;font-size:12.13px;white-space:pre;-webkit-text-stroke:0.25px"><span style="color:#e3e3e3">  ): </span><span style="color:#5cb5e2">Promise</span><span style="color:#e3e3e3">&lt;</span><span style="color:#b696ea">void</span><span style="color:#e3e3e3">&gt; =&gt; {</span></div>
<div class="a mono" style="left:0;width:39px;text-align:right;top:152.60px;height:14.54px;line-height:14.54px;font-size:12.13px;color:#ffffff">95</div>
<div class="a mono" style="left:50.60000000000002px;top:152.60px;height:14.54px;line-height:14.54px;font-size:12.13px;white-space:pre;-webkit-text-stroke:0.25px"><span style="color:#e3e3e3">    </span><span style="color:#b696ea">if</span><span style="color:#e3e3e3"> (!</span><span style="color:#f29766">/\S+@\S+\.\S+/</span><span style="color:#e3e3e3">.</span><span style="display:inline-block;width:11px;height:12px;vertical-align:-2px;margin:0 0.5px"><svg width="11" height="12" viewBox="0 0 11 12"><path d="M0 0h6l5 6-5 6H0z" fill="#4a86e8"/></svg></span><span style="color:#e6c86a;background:#2e5a2c">test</span><span style="color:#e3e3e3">(email)</span><span style="display:inline-block;width:11px;height:12px;vertical-align:-2px;margin:0 0.5px"><svg width="11" height="12" viewBox="0 0 11 12"><path d="M0.8 0.8h5.5l4 5.2-4 5.2H0.8z" fill="none" stroke="#4a86e8" stroke-width="1.5"/></svg></span><span style="color:#e3e3e3">) {</span></div>
<div class="a mono" style="left:0;width:39px;text-align:right;top:167.14px;height:14.54px;line-height:14.54px;font-size:12.13px;color:#c2c4c7">96</div>
<div class="a mono" style="left:50.60000000000002px;top:167.14px;height:14.54px;line-height:14.54px;font-size:12.13px;white-space:pre;-webkit-text-stroke:0.25px"><span style="color:#e3e3e3">      logger.</span><span style="color:#e6c86a">warn</span><span style="color:#e3e3e3">(</span></div>
<div class="a mono" style="left:0;width:39px;text-align:right;top:181.68px;height:14.54px;line-height:14.54px;font-size:12.13px;color:#5d6064">97</div>
<div class="a mono" style="left:50.60000000000002px;top:181.68px;height:14.54px;line-height:14.54px;font-size:12.13px;white-space:pre;-webkit-text-stroke:0.25px"><span style="color:#e3e3e3">        </span><span style="color:#f29766">`calling [signIn]`</span><span style="color:#e3e3e3">,</span></div>
<div class="a mono" style="left:0;width:39px;text-align:right;top:196.22px;height:14.54px;line-height:14.54px;font-size:12.13px;color:#5d6064">98</div>
<div class="a mono" style="left:50.60000000000002px;top:196.22px;height:14.54px;line-height:14.54px;font-size:12.13px;white-space:pre;-webkit-text-stroke:0.25px"><span style="color:#e3e3e3">        </span><span style="color:#f29766">`output: Incorrect email format. Please try again`</span><span style="color:#e3e3e3">,</span></div>
<div class="a mono" style="left:0;width:39px;text-align:right;top:210.76px;height:14.54px;line-height:14.54px;font-size:12.13px;color:#c2c4c7">99</div>
<div class="a mono" style="left:50.60000000000002px;top:210.76px;height:14.54px;line-height:14.54px;font-size:12.13px;white-space:pre;-webkit-text-stroke:0.25px"><span style="color:#e3e3e3">      );</span></div>
<div class="a mono" style="left:0;width:39px;text-align:right;top:225.30px;height:14.54px;line-height:14.54px;font-size:12.13px;color:#c2c4c7">100</div>
<div class="a mono" style="left:50.60000000000002px;top:225.30px;height:14.54px;line-height:14.54px;font-size:12.13px;white-space:pre;-webkit-text-stroke:0.25px"><span style="color:#e3e3e3">    } </span><span style="color:#b696ea">else</span><span style="color:#e3e3e3"> </span><span style="color:#b696ea">if</span><span style="color:#e3e3e3"> (password.</span><span style="color:#e6c86a">length</span><span style="color:#e3e3e3"> === </span><span style="color:#a1d6a0">0</span><span style="color:#e3e3e3">) {</span></div>
<div class="a mono" style="left:0;width:39px;text-align:right;top:239.84px;height:14.54px;line-height:14.54px;font-size:12.13px;color:#c2c4c7">101</div>
<div class="a mono" style="left:50.60000000000002px;top:239.84px;height:14.54px;line-height:14.54px;font-size:12.13px;white-space:pre;-webkit-text-stroke:0.25px"><span style="color:#e3e3e3">      logger.</span><span style="color:#e6c86a">warn</span><span style="color:#e3e3e3">(</span></div>
<div class="a mono" style="left:0;width:39px;text-align:right;top:254.38px;height:14.54px;line-height:14.54px;font-size:12.13px;color:#5d6064">102</div>
<div class="a mono" style="left:50.60000000000002px;top:254.38px;height:14.54px;line-height:14.54px;font-size:12.13px;white-space:pre;-webkit-text-stroke:0.25px"><span style="color:#e3e3e3">        </span><span style="color:#f29766">`calling [signIn]`</span><span style="color:#e3e3e3">,</span></div>
<div class="a mono" style="left:0;width:39px;text-align:right;top:268.92px;height:14.54px;line-height:14.54px;font-size:12.13px;color:#5d6064">103</div>
<div class="a mono" style="left:50.60000000000002px;top:268.92px;height:14.54px;line-height:14.54px;font-size:12.13px;white-space:pre;-webkit-text-stroke:0.25px"><span style="color:#e3e3e3">        </span><span style="color:#f29766">`output: Password is required to Sign-In. Please try again`</span><span style="color:#e3e3e3">,</span></div>
<div class="a mono" style="left:0;width:39px;text-align:right;top:283.46px;height:14.54px;line-height:14.54px;font-size:12.13px;color:#c2c4c7">104</div>
<div class="a mono" style="left:50.60000000000002px;top:283.46px;height:14.54px;line-height:14.54px;font-size:12.13px;white-space:pre;-webkit-text-stroke:0.25px"><span style="color:#e3e3e3">      );</span></div>
<div class="a mono" style="left:0;width:39px;text-align:right;top:298.00px;height:14.54px;line-height:14.54px;font-size:12.13px;color:#5d6064">105</div>
<div class="a mono" style="left:50.60000000000002px;top:298.00px;height:14.54px;line-height:14.54px;font-size:12.13px;white-space:pre;-webkit-text-stroke:0.25px"><span style="color:#e3e3e3">    } </span><span style="color:#b696ea">else</span><span style="color:#e3e3e3"> {</span></div>
<div class="a mono" style="left:0;width:39px;text-align:right;top:312.54px;height:14.54px;line-height:14.54px;font-size:12.13px;color:#5d6064">106</div>
<div class="a mono" style="left:50.60000000000002px;top:312.54px;height:14.54px;line-height:14.54px;font-size:12.13px;white-space:pre;-webkit-text-stroke:0.25px"><span style="color:#bdbdbd">      // Sign-In with email/password. If successful, this save an HTTP Cookie, but will not generate an access-token.</span></div>
<div class="a mono" style="left:0;width:39px;text-align:right;top:327.08px;height:14.54px;line-height:14.54px;font-size:12.13px;color:#5d6064">107</div>
<div class="a mono" style="left:50.60000000000002px;top:327.08px;height:14.54px;line-height:14.54px;font-size:12.13px;white-space:pre;-webkit-text-stroke:0.25px"><span style="color:#bdbdbd">      // Access-Tokens will get generated by calling getToken()</span></div>
<div class="a mono" style="left:0;width:39px;text-align:right;top:341.62px;height:14.54px;line-height:14.54px;font-size:12.13px;color:#c2c4c7">108</div>
<div class="a mono" style="left:50.60000000000002px;top:341.62px;height:14.54px;line-height:14.54px;font-size:12.13px;white-space:pre;-webkit-text-stroke:0.25px"><span style="color:#e3e3e3">      </span><span style="color:#b696ea">const</span><span style="color:#e3e3e3"> </span><span style="color:#5cb5e2">signInResponse</span><span style="color:#e3e3e3"> = </span><span style="color:#b696ea">await</span><span style="color:#e3e3e3"> signInWithCredentials({</span></div>
<div class="a mono" style="left:0;width:39px;text-align:right;top:356.16px;height:14.54px;line-height:14.54px;font-size:12.13px;color:#5d6064">109</div>
<div class="a mono" style="left:50.60000000000002px;top:356.16px;height:14.54px;line-height:14.54px;font-size:12.13px;white-space:pre;-webkit-text-stroke:0.25px"><span style="color:#e3e3e3">        </span><span style="color:#e6c86a">email</span><span style="color:#e3e3e3">,</span></div>
<div class="a" style="left:1370px;top:0px;width:1px;height:361px;background:#353638;"></div>
<div class="a" style="left:1371px;top:0px;width:13px;height:361px;background:#2a2a2b;"></div>
<div class="a" style="left:1373.5px;top:160px;width:8px;height:42px;background:#6b6b6b;border-radius:4px"></div>
</div>
<div class="a" style="left:408px;top:905px;width:1384px;height:1px;background:#3a3b3e;"></div>
<div class="a" style="left:408px;top:906px;width:1384px;height:25px;background:#292a2d;"></div>
<div class="a" style="left:414.7px;top:912.91px;font:normal normal 13.8px/normal 'Liberation Sans',sans-serif;color:#a9acb0;letter-spacing:-0.299px;">Line 95, Column 25</div>
<div class="a" style="left:1546.3px;top:912.91px;font:normal normal 13.8px/normal 'Liberation Sans',sans-serif;color:#a9acb0;letter-spacing:-0.454px;">(From </div>
<div class="a" style="left:1584.2px;top:912.91px;font:normal normal 13.8px/normal 'Liberation Sans',sans-serif;color:#c7c9cc;letter-spacing:-0.284px;text-decoration:underline">main.a620de0a.js</div>
<div class="a" style="left:1688.6px;top:912.91px;font:normal normal 13.8px/normal 'Liberation Sans',sans-serif;color:#a9acb0;letter-spacing:0.000px;">)</div>
<div class="a" style="left:1697.5px;top:912.91px;font:normal normal 13.8px/normal 'Liberation Sans',sans-serif;color:#8f9297;letter-spacing:-0.261px;">Coverage: n/a</div>
<div class="a" style="left:1794px;top:544px;width:238px;height:387px;background:#202124;"></div>
<div class="a" style="left:2032px;top:544px;width:1px;height:387px;background:#353638;"></div>
<div class="a" style="left:2033px;top:544px;width:14px;height:387px;background:#2a2a2b;"></div>
<div class="a" style="left:2036px;top:546px;width:8px;height:89px;background:#6b6b6b;border-radius:4px"></div>
<div class="a" style="left:1794px;top:544px;width:238px;height:30px;background:#6f5300;"></div>
<svg class="a" style="left:1801.5px;top:550.5px" width="13" height="13" viewBox="0 0 13 13"><circle cx="6.5" cy="6.5" r="6" fill="#a3a3a3"/><rect x="5.6" y="5.5" width="1.9" height="5" fill="#6f5300"/><circle cx="6.5" cy="3.4" r="1.05" fill="#6f5300"/></svg>
<div class="a" style="left:1817.2px;top:549.91px;font:normal bold 13.8px/normal 'Liberation Sans',sans-serif;color:#dedede;letter-spacing:-0.328px;">Paused on breakpoint</div>
<div class="a" style="left:1794px;top:574px;width:238px;height:1px;background:#46494d;"></div>
<div class="a" style="left:1794px;top:575px;width:238px;height:23px;background:#292a2d;"></div>
<div class="a" style="left:1805px;top:582px;width:0;height:0;border-top:4.5px solid transparent;border-bottom:4.5px solid transparent;border-left:7px solid #909397"></div>
<div class="a" style="left:1817.2px;top:579.33px;font:normal normal 14.0px/normal 'Liberation Sans',sans-serif;color:#d5d8dc;letter-spacing:-0.471px;">Watch</div>
<div class="a" style="left:1794px;top:598px;width:238px;height:1px;background:#46494d;"></div>
<div class="a" style="left:1794px;top:599px;width:238px;height:22px;background:#292a2d;"></div>
<div class="a" style="left:1803.5px;top:607px;width:0;height:0;border-left:4.5px solid transparent;border-right:4.5px solid transparent;border-top:7px solid #909397"></div>
<div class="a" style="left:1817.2px;top:602.83px;font:normal normal 14.0px/normal 'Liberation Sans',sans-serif;color:#d5d8dc;letter-spacing:-0.303px;">Breakpoints</div>
<div class="a" style="left:1794px;top:621px;width:238px;height:1px;background:#46494d;"></div>
<div class="a" style="left:1801px;top:629px;width:12px;height:12px;background:#3b3b3b;border:1px solid #8a8a8a;border-radius:2px"></div>
<div class="a" style="left:1820.6px;top:627.33px;font:normal normal 14.0px/normal 'Liberation Sans',sans-serif;color:#d5d8dc;letter-spacing:-0.339px;">Pause on uncaught exceptions</div>
<div class="a" style="left:1801px;top:649px;width:12px;height:12px;background:#3b3b3b;border:1px solid #8a8a8a;border-radius:2px"></div>
<div class="a" style="left:1820.6px;top:647.33px;font:normal normal 14.0px/normal 'Liberation Sans',sans-serif;color:#d5d8dc;letter-spacing:-0.327px;">Pause on caught exceptions</div>
<div class="a" style="left:1794px;top:668px;width:238px;height:1px;background:#46494d;"></div>
<div class="a" style="left:1800.5px;top:676px;width:0;height:0;border-left:4.5px solid transparent;border-right:4.5px solid transparent;border-top:7px solid #909397"></div>
<svg class="a" style="left:1815px;top:672px" width="14" height="14" viewBox="0 0 14 14" fill="none" stroke="#f5a55a" stroke-width="1.3"><rect x="0.8" y="0.8" width="12.4" height="12.4" rx="1"/><path d="M5.5 4.8L3.5 7l2 2.2M8.5 4.8l2 2.2-2 2.2"/></svg>
<div class="a" style="left:1835.7px;top:671.74px;font:normal bold 13px/normal 'Liberation Sans',sans-serif;color:#e3e3e3;letter-spacing:-0.769px;">SignInWithAxAuth.tsx</div>
<div class="a" style="left:1794px;top:689px;width:238px;height:22px;background:#6f5300;"></div>
<svg class="a" style="left:1816px;top:694px" width="12" height="12" viewBox="0 0 12 12"><rect width="12" height="12" rx="2" fill="#f9a825"/><path d="M2.5 6.2l2.4 2.4 4.6-5" fill="none" stroke="#202124" stroke-width="1.8"/></svg>
<div class="a" style="left:1836.4px;top:693.19px;font:normal normal 11.94px/normal 'Liberation Mono',monospace;color:#bdb497;letter-spacing:0.054px;">if (!/\S+@\S+\.\S+/.…</div>
<div class="a" style="left:2008.5px;top:692.41px;font:normal normal 13.8px/normal 'Liberation Sans',sans-serif;color:#eeeeee;letter-spacing:-0.475px;">95</div>
<div class="a" style="left:1794px;top:711px;width:238px;height:1px;background:#46494d;"></div>
<div class="a" style="left:1794px;top:712px;width:238px;height:22px;background:#292a2d;"></div>
<div class="a" style="left:1803.5px;top:720px;width:0;height:0;border-left:4.5px solid transparent;border-right:4.5px solid transparent;border-top:7px solid #909397"></div>
<div class="a" style="left:1817.1px;top:716.33px;font:normal normal 14.0px/normal 'Liberation Sans',sans-serif;color:#d5d8dc;letter-spacing:-0.420px;">Scope</div>
<div class="a" style="left:1794px;top:734px;width:238px;height:1px;background:#46494d;"></div>
<div class="a" style="left:1802.5px;top:743.5px;width:0;height:0;border-left:4px solid transparent;border-right:4px solid transparent;border-top:6.5px solid #909397"></div>
<div class="a" style="left:1816.4px;top:740.94px;font:normal normal 12px/normal 'Liberation Mono',monospace;color:#eeeeee;letter-spacing:-0.101px;">Local</div>
<div class="a mono" style="left:1825px;top:758.9px;font-size:12px;color:#9aa0a6;letter-spacing:0.15px">this: <span style="color:#8b8e92">undefined</span></div>
<div class="a" style="left:1813px;top:779px;width:0;height:0;border-top:4px solid transparent;border-bottom:4px solid transparent;border-left:6.5px solid #909397"></div>
<div class="a mono" style="left:1824px;top:776.9px;font-size:12px;color:#e3e3e3;letter-spacing:0.15px;width:208px;overflow:hidden"><span style="color:#5cb5e2;font-weight:bold">e</span>: <span style="color:#9aa0a6">w</span> {tryEntries: Array(1), p</div>
<div class="a" style="left:1803px;top:798.0px;width:0;height:0;border-top:4px solid transparent;border-bottom:4px solid transparent;border-left:6.5px solid #909397"></div>
<div class="a" style="left:1816.4px;top:796.14px;font:normal normal 12px/normal 'Liberation Mono',monospace;color:#eeeeee;letter-spacing:-0.111px;">Closure (e)</div>
<div class="a" style="left:1803px;top:817.7px;width:0;height:0;border-top:4px solid transparent;border-bottom:4px solid transparent;border-left:6.5px solid #909397"></div>
<div class="a" style="left:1816.4px;top:815.84px;font:normal normal 12px/normal 'Liberation Mono',monospace;color:#eeeeee;letter-spacing:-0.111px;">Closure</div>
<div class="a" style="left:1803px;top:837.4px;width:0;height:0;border-top:4px solid transparent;border-bottom:4px solid transparent;border-left:6.5px solid #909397"></div>
<div class="a" style="left:1816.4px;top:835.54px;font:normal normal 12px/normal 'Liberation Mono',monospace;color:#eeeeee;letter-spacing:-0.111px;">Closure (hb)</div>
<div class="a" style="left:1803px;top:857.6px;width:0;height:0;border-top:4px solid transparent;border-bottom:4px solid transparent;border-left:6.5px solid #909397"></div>
<div class="a" style="left:1816.4px;top:855.74px;font:normal normal 12px/normal 'Liberation Mono',monospace;color:#eeeeee;letter-spacing:-0.111px;">Closure</div>
<div class="a" style="left:1803px;top:876.9px;width:0;height:0;border-top:4px solid transparent;border-bottom:4px solid transparent;border-left:6.5px solid #909397"></div>
<div class="a" style="left:1816.4px;top:875.04px;font:normal normal 12px/normal 'Liberation Mono',monospace;color:#eeeeee;letter-spacing:-0.111px;">Closure</div>
<div class="a" style="left:1803px;top:896.6px;width:0;height:0;border-top:4px solid transparent;border-bottom:4px solid transparent;border-left:6.5px solid #909397"></div>
<div class="a" style="left:1816.4px;top:894.74px;font:normal normal 12px/normal 'Liberation Mono',monospace;color:#eeeeee;letter-spacing:-0.111px;">Global</div>
<div class="a" style="left:1983.7px;top:894.74px;font:normal normal 12px/normal 'Liberation Mono',monospace;color:#eeeeee;letter-spacing:0.132px;">Window</div>
<div class="a" style="left:1794px;top:911px;width:238px;height:1px;background:#46494d;"></div>
<div class="a" style="left:1794px;top:912px;width:238px;height:19px;background:#292a2d;"></div>
<div class="a" style="left:1803.5px;top:920px;width:0;height:0;border-left:4.5px solid transparent;border-right:4.5px solid transparent;border-top:7px solid #909397"></div>
<div class="a" style="left:1817.1px;top:915.83px;font:normal normal 14.0px/normal 'Liberation Sans',sans-serif;color:#d5d8dc;letter-spacing:-0.382px;">Call Stack</div>
<svg class="a" style="left:0px;top:925px" width="6" height="6" viewBox="0 0 6 6"><path d="M0 0V6H6A6 6 0 0 1 0 0z" fill="#111"/></svg>
<div class="a" style="left:2046px;top:483px;width:1px;height:443px;background:#6a6b6e;"></div>
<svg class="a" style="left:2040px;top:924px" width="7" height="7" viewBox="0 0 7 7"><path d="M7 0V7H0A7 7 0 0 0 7 0z" fill="#000"/></svg>
</body></html>
